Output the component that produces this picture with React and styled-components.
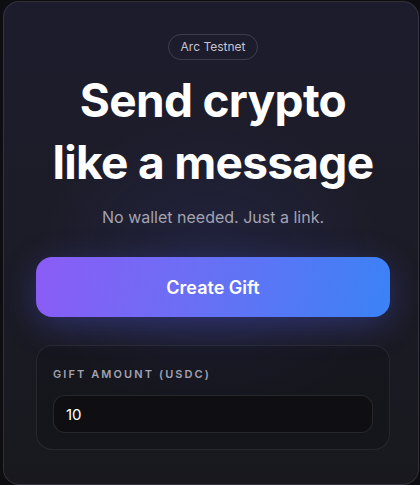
import { useState } from "react";
import styled, { createGlobalStyle } from "styled-components";

const GlobalStyle = createGlobalStyle`
  * { box-sizing: border-box; }
  html, body {
    margin: 0;
    background: #0d0d12;
    font-family: Inter, "Noto Sans", "Liberation Sans", sans-serif;
    -webkit-font-smoothing: antialiased;
  }
`;

const Page = styled.div`
  width: 420px;
  padding: 1px 1px 4px 3px;
`;

const Card = styled.div`
  display: flex;
  flex-direction: column;
  align-items: center;
  width: 416px;
  padding: 32px 28px 34px 32px;
  border: 1px solid rgba(255, 255, 255, 0.1);
  border-radius: 16px;
  background:
    radial-gradient(ellipse 60% 45% at 50% 55%, rgba(60, 70, 170, 0.18), transparent 70%),
    linear-gradient(180deg, #1d1c2d 0%, #1c1c28 45%, #18181e 100%);
`;

const Badge = styled.span`
  display: inline-block;
  padding: 4px 12px;
  font-size: 12px;
  line-height: 16px;
  color: #c3c3d2;
  border: 1px solid rgba(255, 255, 255, 0.14);
  border-radius: 999px;
`;

const Title = styled.h1`
  margin: 10px 0 0;
  font-size: 46px;
  line-height: 61.6px;
  font-weight: 700;
  letter-spacing: -0.015em;
  color: #ffffff;
  text-align: center;
`;

const Subtitle = styled.p`
  margin: 12px 0 0;
  font-size: 16px;
  line-height: 24px;
  color: #a3a3b2;
`;

const GiftButton = styled.button`
  margin-top: 28px;
  width: 100%;
  height: 60px;
  border: none;
  border-radius: 16px;
  background: linear-gradient(100deg, #8b5cf6 0%, #6a6ff5 45%, #3b82f6 100%);
  color: #fff;
  font-family: inherit;
  font-size: 18px;
  font-weight: 600;
  cursor: pointer;
  box-shadow: 0 8px 32px rgba(80, 90, 230, 0.35);
`;

const Panel = styled.div`
  margin-top: 28px;
  width: 100%;
  padding: 20px 16px 16px;
  border: 1px solid rgba(255, 255, 255, 0.08);
  border-radius: 16px;
  background: rgba(10, 10, 14, 0.25);
`;

const Label = styled.label`
  display: block;
  font-size: 11px;
  line-height: 16px;
  font-weight: 600;
  letter-spacing: 0.19em;
  text-transform: uppercase;
  color: #a2a2b0;
`;

const AmountInput = styled.input`
  display: block;
  width: 100%;
  height: 38px;
  margin-top: 13px;
  padding: 0 12px;
  border: 1px solid rgba(255, 255, 255, 0.1);
  border-radius: 12px;
  background: #0f0f13;
  color: #fff;
  font-family: inherit;
  font-size: 15px;
  outline: none;
`;

export default function App() {
  const [amount, setAmount] = useState("10");

  return (
    <Page>
      <GlobalStyle />
      <Card>
        <Badge>Arc Testnet</Badge>
        <Title>
          Send crypto
          <br />
          like a message
        </Title>
        <Subtitle>No wallet needed. Just a link.</Subtitle>
        <GiftButton type="button">Create Gift</GiftButton>
        <Panel>
          <Label htmlFor="amount">Gift amount (USDC)</Label>
          <AmountInput
            id="amount"
            value={amount}
            onChange={(e) => setAmount(e.target.value)}
          />
        </Panel>
      </Card>
    </Page>
  );
}
